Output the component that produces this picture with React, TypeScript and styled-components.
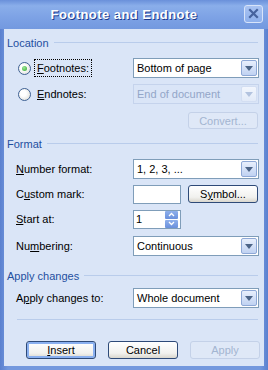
import React from "react";
import styled, { createGlobalStyle, css } from "styled-components";

const Global = createGlobalStyle`
  html, body { margin: 0; padding: 0; background: #ffffff; }
  * { box-sizing: border-box; }
`;

const Window = styled.div`
  width: 268px;
  height: 370px;
  display: flex;
  flex-direction: column;
  background: linear-gradient(90deg, #5a80cf, #7398de 3%, #7398de 97%, #5a80cf);
  font-family: "Liberation Sans", Arial, sans-serif;
  font-size: 11px;
  color: #000;
`;

const TitleBar = styled.div`
  height: 29px;
  flex: none;
  display: flex;
  align-items: center;
  background: linear-gradient(#6a90da 0%, #8aaeea 20%, #7da2e5 60%, #7399df 100%);
`;

const Title = styled.div`
  flex: 1;
  text-align: center;
  padding-left: 4px;
  color: #fff;
  font-weight: bold;
  font-size: 13px;
  letter-spacing: 0.45px;
  text-shadow: 1px 1px 0 #1b3a8c;
`;

const CloseButton = styled.div`
  width: 19px;
  height: 18px;
  margin: 0 5px 2px 0;
  border: 1px solid #d8e4fa;
  border-radius: 3px;
  background: linear-gradient(#a9c3f2, #8eb0ec);
  display: flex;
  align-items: center;
  justify-content: center;
`;

const Body = styled.div`
  flex: 1;
  margin: 0 4px 4px 4px;
  background: #dae5f7;
  padding-top: 7px;
  display: flex;
  flex-direction: column;
`;

const SectionHeader = styled.div<{ $mt?: number }>`
  height: 13px;
  margin-top: ${(p) => p.$mt ?? 0}px;
  padding-left: 3px;
  padding-right: 6px;
  display: flex;
  align-items: center;
  gap: 5px;
  color: #1f4f9f;
  &::after {
    content: "";
    flex: 1;
    height: 1px;
    background: #b9cceb;
  }
`;

const Row = styled.div<{ $mt: number; $h?: number }>`
  margin-top: ${(p) => p.$mt}px;
  height: ${(p) => p.$h ?? 20}px;
  display: grid;
  grid-template-columns: 117px 1fr;
  align-items: center;
  padding-left: 12px;
  padding-right: 5px;
`;

const Label = styled.span`
  white-space: nowrap;
`;

const RadioLabel = styled.label`
  display: flex;
  align-items: center;
  gap: 3px;
  padding-left: 2px;
  white-space: nowrap;
`;

const RadioCircle = styled.span<{ $checked?: boolean }>`
  width: 13px;
  height: 13px;
  border-radius: 50%;
  border: 1px solid #3e6193;
  background: radial-gradient(circle at 40% 40%, #ffffff 30%, #d6d6cf 100%);
  display: flex;
  align-items: center;
  justify-content: center;
  ${(p) =>
    p.$checked &&
    css`
      &::after {
        content: "";
        width: 5px;
        height: 5px;
        border-radius: 50%;
        background: radial-gradient(circle at 40% 35%, #9ee89a, #2ea52a);
      }
    `}
`;

const Focus = styled.span<{ $focus?: boolean }>`
  padding: 2px 2px;
  border: 1px dotted ${(p) => (p.$focus ? "#000" : "transparent")};
`;

const Combo = styled.div<{ $disabled?: boolean }>`
  height: 20px;
  border: 1px solid ${(p) => (p.$disabled ? "#c5d3ec" : "#7f9db9")};
  background: ${(p) => (p.$disabled ? "#dae5f7" : "#fff")};
  color: ${(p) => (p.$disabled ? "#93a6c8" : "#000")};
  display: flex;
  align-items: center;
  padding: 1px;
  padding-left: 3px;
`;

const ComboText = styled.span`
  flex: 1;
  white-space: nowrap;
`;

const ArrowBtn = styled.span<{ $disabled?: boolean }>`
  width: 16px;
  height: 16px;
  border-radius: 2px;
  border: 1px solid ${(p) => (p.$disabled ? "#d3def2" : "#8ea8d6")};
  background: ${(p) =>
    p.$disabled ? "linear-gradient(#f2f6fd, #e2eaf8)" : "linear-gradient(#e8effc, #c0d2f2)"};
  display: flex;
  align-items: center;
  justify-content: center;
`;

const Triangle = styled.span<{ $disabled?: boolean }>`
  width: 0;
  height: 0;
  border-left: 4.5px solid transparent;
  border-right: 4.5px solid transparent;
  border-top: 5px solid ${(p) => (p.$disabled ? "#b3c3df" : "#4c6487")};
  margin-top: 1px;
`;

const Controls = styled.div`
  display: flex;
  align-items: center;
  gap: 7px;
`;

const TextBox = styled.div`
  width: 48px;
  height: 19px;
  border: 1px solid #7f9db9;
  background: #fff;
  display: flex;
  align-items: center;
  padding-left: 2px;
`;

const SpinText = styled.span`
  flex: 1;
`;

const Spin = styled.div`
  width: 13px;
  height: 17px;
  display: flex;
  flex-direction: column;
  gap: 1px;
  margin-right: 2px;
`;

const SpinHalf = styled.span`
  flex: 1;
  background: linear-gradient(#8fb0ec, #6a90dc);
  border-radius: 1px;
  display: flex;
  align-items: center;
  justify-content: center;
`;

const Button = styled.div<{ $w?: number; $h?: number; $default?: boolean; $disabled?: boolean }>`
  width: ${(p) => p.$w ?? 70}px;
  height: ${(p) => p.$h ?? 18}px;
  border-radius: 3px;
  border: 1px solid ${(p) => (p.$disabled ? "#c4d1e8" : "#2e4a78")};
  background: ${(p) =>
    p.$disabled ? "#dfe8f7" : "linear-gradient(#ffffff, #f1f1ee 70%, #d9d6cd)"};
  color: ${(p) => (p.$disabled ? "#a3b5d1" : "#000")};
  display: flex;
  align-items: center;
  justify-content: center;
  ${(p) =>
    p.$default &&
    css`
      box-shadow: inset 0 0 0 2px #8ab0f0;
    `}
`;

const RightRow = styled.div<{ $mt: number }>`
  margin-top: ${(p) => p.$mt}px;
  display: flex;
  justify-content: flex-end;
  padding-right: 6px;
`;

const Separator = styled.div`
  margin: 11px 6px 0 13px;
  height: 1px;
  background: #b9cceb;
`;

const ButtonBar = styled.div`
  margin-top: 21px;
  display: flex;
  gap: 12px;
  padding-left: 22px;
`;

const DropArrow = ({ disabled }: { disabled?: boolean }) => (
  <ArrowBtn $disabled={disabled}>
    <Triangle $disabled={disabled} />
  </ArrowBtn>
);

const ComboBox = ({ value, disabled }: { value: string; disabled?: boolean }) => (
  <Combo $disabled={disabled}>
    <ComboText>{value}</ComboText>
    <DropArrow disabled={disabled} />
  </Combo>
);

export default function App() {
  return (
    <>
      <Global />
      <Window>
        <TitleBar>
          <Title>Footnote and Endnote</Title>
          <CloseButton>
            <svg width="11" height="11" viewBox="0 0 11 11">
              <path d="M2 2 L9 9 M9 2 L2 9" stroke="#46639e" strokeWidth="2.2" strokeLinecap="square" />
            </svg>
          </CloseButton>
        </TitleBar>
        <Body>
          <SectionHeader>Location</SectionHeader>
          <Row $mt={9}>
            <RadioLabel>
              <RadioCircle $checked />
              <Focus $focus>
                <u>F</u>ootnotes:
              </Focus>
            </RadioLabel>
            <ComboBox value="Bottom of page" />
          </Row>
          <Row $mt={6}>
            <RadioLabel>
              <RadioCircle />
              <Focus>
                <u>E</u>ndnotes:
              </Focus>
            </RadioLabel>
            <ComboBox value="End of document" disabled />
          </Row>
          <RightRow $mt={8}>
            <Button $w={70} $h={17} $disabled>
              Convert...
            </Button>
          </RightRow>
          <SectionHeader $mt={8}>Format</SectionHeader>
          <Row $mt={9}>
            <Label>
              <u>N</u>umber format:
            </Label>
            <ComboBox value="1, 2, 3, ..." />
          </Row>
          <Row $mt={5}>
            <Label>
              C<u>u</u>stom mark:
            </Label>
            <Controls>
              <TextBox />
              <Button $w={70}>
                S<u>y</u>mbol...
              </Button>
            </Controls>
          </Row>
          <Row $mt={5}>
            <Label>
              <u>S</u>tart at:
            </Label>
            <Controls>
              <TextBox>
                <SpinText>1</SpinText>
                <Spin>
                  <SpinHalf>
                    <svg width="7" height="5" viewBox="0 0 7 5">
                      <path d="M1 4 L3.5 1.5 L6 4" stroke="#fff" strokeWidth="1.3" fill="none" />
                    </svg>
                  </SpinHalf>
                  <SpinHalf>
                    <svg width="7" height="5" viewBox="0 0 7 5">
                      <path d="M1 1 L3.5 3.5 L6 1" stroke="#fff" strokeWidth="1.3" fill="none" />
                    </svg>
                  </SpinHalf>
                </Spin>
              </TextBox>
            </Controls>
          </Row>
          <Row $mt={7}>
            <Label>
              Nu<u>m</u>bering:
            </Label>
            <ComboBox value="Continuous" />
          </Row>
          <SectionHeader $mt={13}>Apply changes</SectionHeader>
          <Row $mt={6}>
            <Label>
              A<u>p</u>ply changes to:
            </Label>
            <ComboBox value="Whole document" />
          </Row>
          <Separator />
          <ButtonBar>
            <Button $default>
              <u>I</u>nsert
            </Button>
            <Button>Cancel</Button>
            <Button $disabled>Apply</Button>
          </ButtonBar>
        </Body>
      </Window>
    </>
  );
}
